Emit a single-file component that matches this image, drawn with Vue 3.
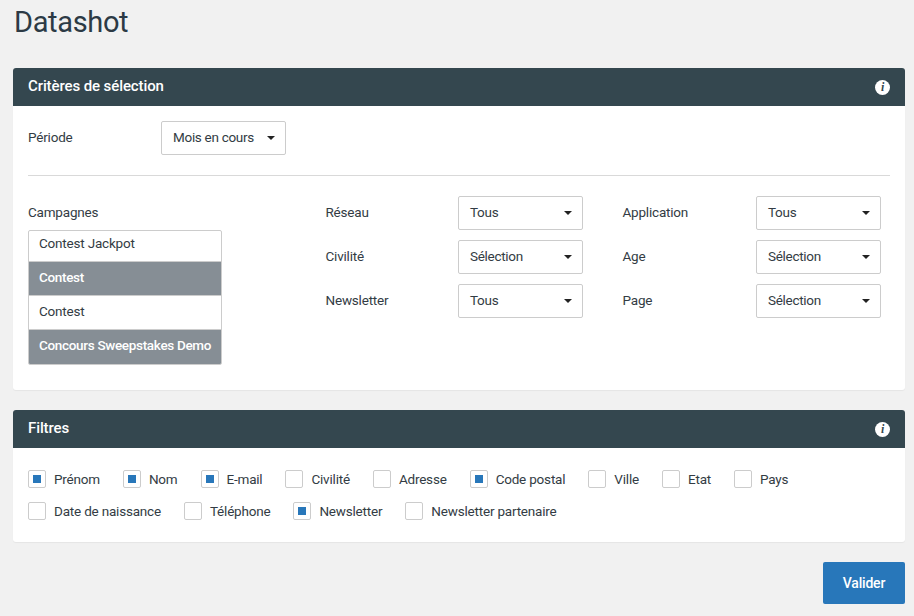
<script setup>
import { ref } from 'vue'

const campaigns = ref([
  { name: 'Contest Jackpot', selected: false },
  { name: 'Contest', selected: true },
  { name: 'Contest', selected: false },
  { name: 'Concours Sweepstakes Demo', selected: true }
])

const selects = [
  { label: 'Réseau', value: 'Tous' },
  { label: 'Application', value: 'Tous' },
  { label: 'Civilité', value: 'Sélection' },
  { label: 'Age', value: 'Sélection' },
  { label: 'Newsletter', value: 'Tous' },
  { label: 'Page', value: 'Sélection' }
]

const filterRows = ref([
  [
    { label: 'Prénom', on: true },
    { label: 'Nom', on: true },
    { label: 'E-mail', on: true },
    { label: 'Civilité', on: false },
    { label: 'Adresse', on: false },
    { label: 'Code postal', on: true },
    { label: 'Ville', on: false },
    { label: 'Etat', on: false },
    { label: 'Pays', on: false }
  ],
  [
    { label: 'Date de naissance', on: false },
    { label: 'Téléphone', on: false },
    { label: 'Newsletter', on: true },
    { label: 'Newsletter partenaire', on: false }
  ]
])
</script>

<template>
  <div class="page">
    <h1 class="title">Datashot</h1>

    <section class="panel">
      <header class="panel-head">
        <h2>Critères de sélection</h2>
        <span class="info">i</span>
      </header>
      <div class="panel-body criteria">
        <div class="period">
          <label class="period-label">Période</label>
          <div class="select">
            <span>Mois en cours</span>
            <i class="caret"></i>
          </div>
        </div>
        <hr class="divider" />
        <div class="criteria-main">
          <div class="campaigns">
            <label>Campagnes</label>
            <ul class="listbox">
              <li
                v-for="(c, i) in campaigns"
                :key="i"
                :class="{ selected: c.selected }"
              >{{ c.name }}</li>
            </ul>
          </div>
          <div class="select-grid">
            <div v-for="s in selects" :key="s.label" class="select-row">
              <label>{{ s.label }}</label>
              <div class="select">
                <span>{{ s.value }}</span>
                <i class="caret"></i>
              </div>
            </div>
          </div>
        </div>
      </div>
    </section>

    <section class="panel">
      <header class="panel-head">
        <h2>Filtres</h2>
        <span class="info">i</span>
      </header>
      <div class="panel-body filters">
        <div v-for="(row, r) in filterRows" :key="r" class="filter-row">
          <label v-for="f in row" :key="f.label" class="check">
            <span class="box" :class="{ on: f.on }"></span>
            <span>{{ f.label }}</span>
          </label>
        </div>
      </div>
    </section>

    <div class="actions">
      <button class="submit">Valider</button>
    </div>
  </div>
</template>

<style>
html, body {
  background: #f1f1f1;
}
</style>

<style scoped>
.page {
  width: 914px;
  height: 616px;
  box-sizing: border-box;
  padding: 0 9px 0 13px;
  background: #f1f1f1;
  font-family: Roboto, "Liberation Sans", sans-serif;
  font-size: 13.5px;
  letter-spacing: -0.2px;
  color: #333c44;
  overflow: hidden;
}

.title {
  margin: 0;
  height: 68px;
  padding: 3px 0 0 1px;
  box-sizing: border-box;
  font-size: 29px;
  line-height: 38px;
  font-weight: 400;
  color: #2c3a45;
  letter-spacing: -0.35px;
}

.panel {
  background: #fff;
  border-radius: 3px;
  box-shadow: 0 1px 1px rgba(0, 0, 0, 0.05);
  margin-bottom: 20px;
}

.panel-head {
  height: 38px;
  background: #34474f;
  border-radius: 3px 3px 0 0;
  display: flex;
  align-items: center;
  justify-content: space-between;
  padding: 0 15px;
}

.panel-head h2 {
  margin: 0 0 2px;
  font-size: 15px;
  font-weight: 500;
  letter-spacing: -0.1px;
  color: #fff;
}

.info {
  width: 15px;
  height: 15px;
  border-radius: 50%;
  background: #fff;
  color: #34474f;
  font-family: "Liberation Serif", serif;
  font-style: italic;
  font-weight: 700;
  font-size: 12px;
  line-height: 15px;
  text-align: center;
}

.criteria {
  padding: 15px 15px 25px;
  height: 284px;
  box-sizing: border-box;
}

.period {
  display: flex;
  align-items: center;
}

.period-label {
  width: 133px;
  padding-bottom: 2px;
}

.select {
  width: 125px;
  height: 34px;
  box-sizing: border-box;
  border: 1px solid #ccc;
  border-radius: 2px;
  background: #fff;
  display: flex;
  align-items: center;
  justify-content: space-between;
  padding: 0 10px 2px 11px;
}

.select span {
  letter-spacing: -0.3px;
}

.caret {
  width: 0;
  height: 0;
  margin-top: 2px;
  border-left: 4px solid transparent;
  border-right: 4px solid transparent;
  border-top: 4px solid #222;
}

.divider {
  border: 0;
  border-top: 1px solid #d9d9d9;
  margin: 20px 0;
}

.criteria-main {
  display: flex;
}

.campaigns {
  width: 297px;
  padding-top: 8px;
}

.campaigns label {
  display: block;
  line-height: 17px;
  margin-bottom: 9px;
}

.listbox {
  list-style: none;
  margin: 0;
  padding: 0;
  width: 194px;
  height: 135px;
  box-sizing: border-box;
  border: 1px solid #ccc;
  border-radius: 2px;
  overflow: hidden;
}

.listbox li {
  height: 34px;
  box-sizing: border-box;
  padding: 0 0 0 10px;
  line-height: 31px;
  white-space: nowrap;
  border-bottom: 1px solid #ccc;
}

.listbox li:first-child {
  height: 31px;
  line-height: 25px;
}

.listbox li:last-child {
  border-bottom: 0;
}

.listbox li.selected {
  background: #868e95;
  color: #fff;
  font-weight: 500;
  letter-spacing: -0.32px;
}

.select-grid {
  display: grid;
  grid-template-columns: 258px 259px;
  column-gap: 39px;
  row-gap: 10px;
  align-content: start;
}

.select-row {
  display: flex;
  align-items: center;
  justify-content: space-between;
}

.select-row label {
  padding: 0 0 2px 0.5px;
}

.filters {
  height: 94px;
  box-sizing: border-box;
  padding: 22px 15px 0;
}

.filter-row {
  display: flex;
  gap: 23px;
  height: 18px;
  margin-bottom: 14px;
}

.check {
  display: flex;
  align-items: center;
  gap: 8px;
}

.box {
  width: 18px;
  height: 18px;
  box-sizing: border-box;
  border: 1px solid #ccc;
  border-radius: 2px;
  display: flex;
  align-items: center;
  justify-content: center;
}

.box.on::after {
  content: '';
  width: 8px;
  height: 8px;
  background: #2877ba;
}

.actions {
  display: flex;
  justify-content: flex-end;
}

.submit {
  width: 82px;
  height: 42px;
  border: 0;
  border-radius: 2px;
  background: #2877ba;
  color: #fff;
  font-family: inherit;
  font-size: 14px;
  font-weight: 500;
  letter-spacing: -0.2px;
}
</style>
